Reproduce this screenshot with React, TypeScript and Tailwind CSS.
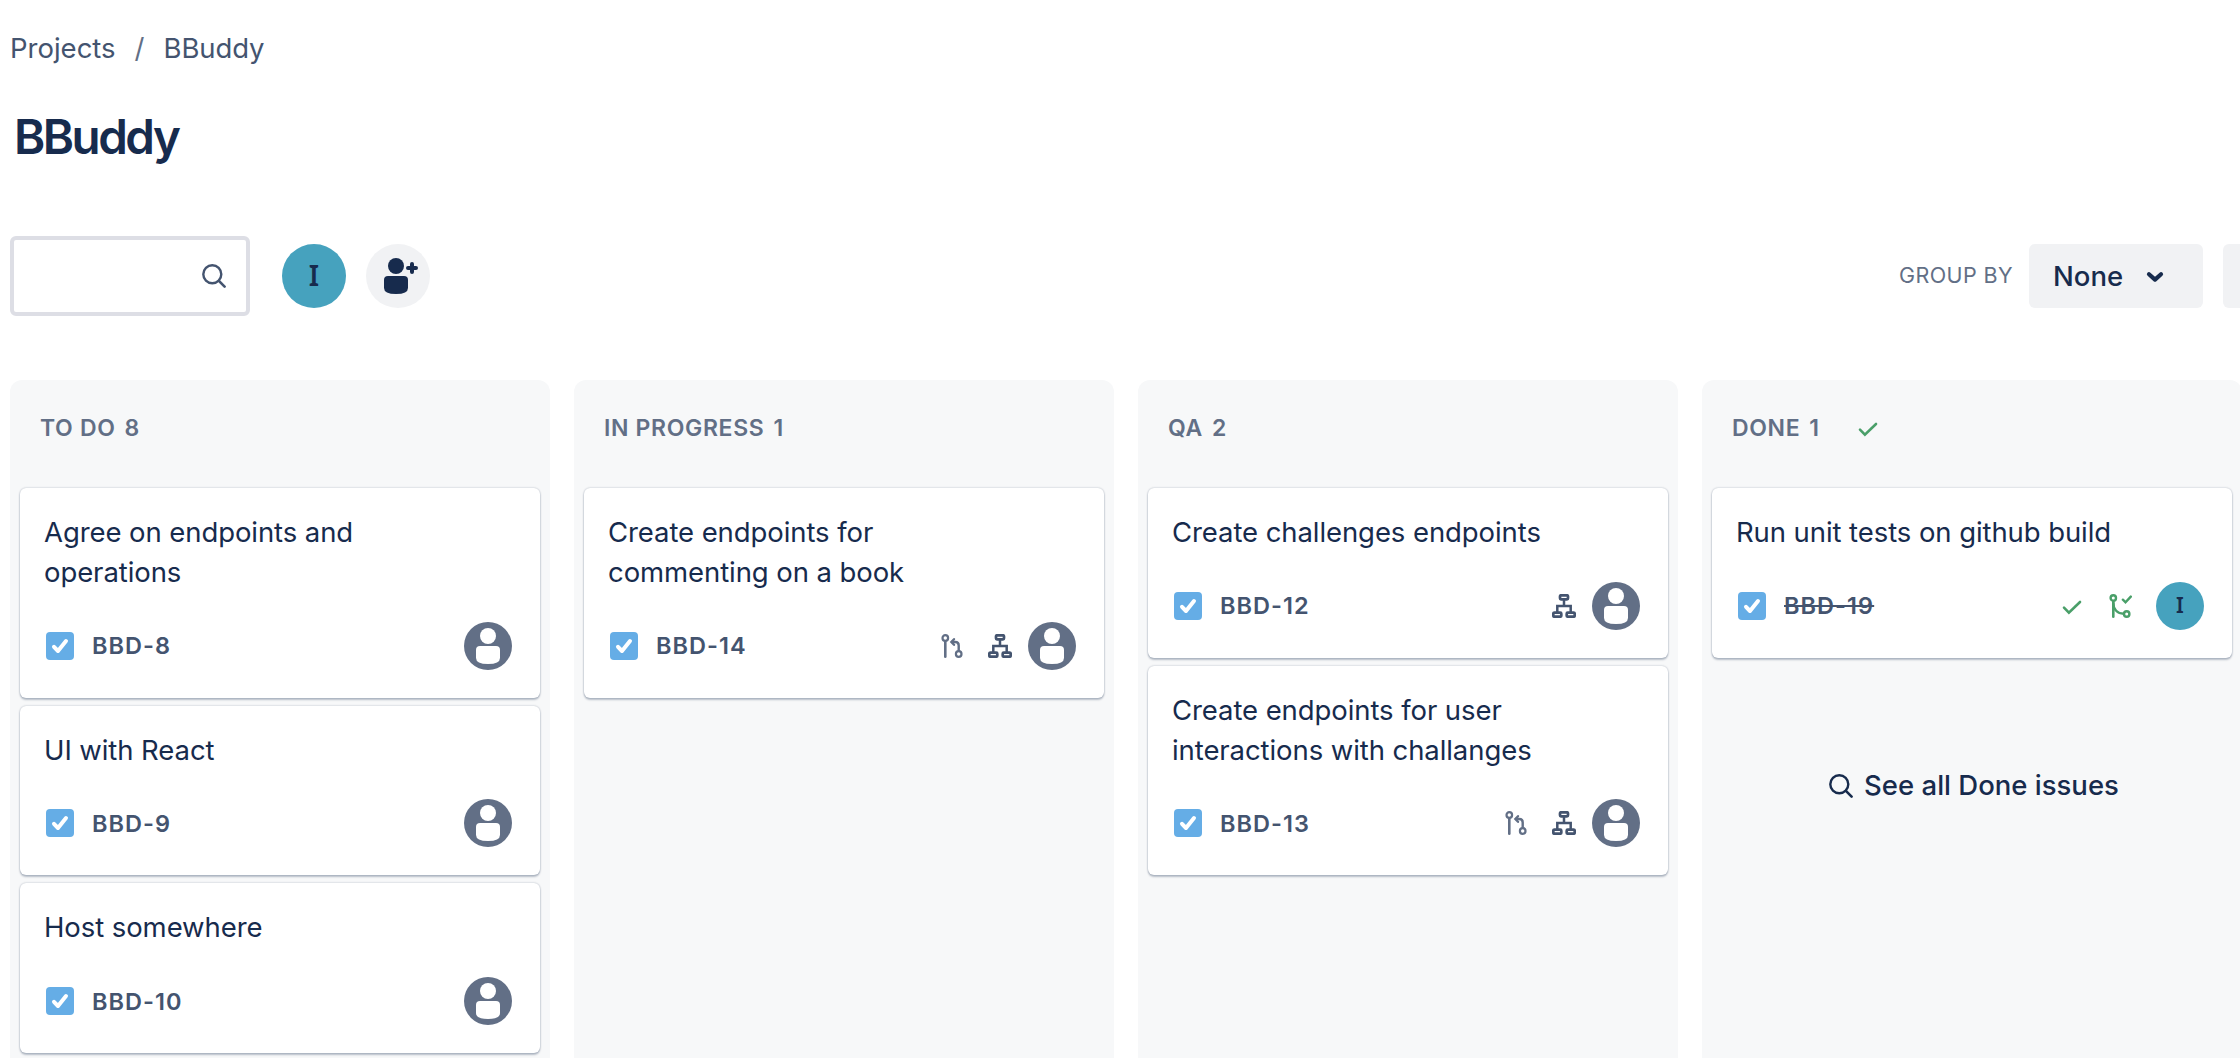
import type { ReactNode } from 'react';

type Status = 'branch' | 'subtasks' | 'done' | 'merged';

type Issue = {
  key: string;
  title: string;
  status?: Status[];
  assignee?: string;
  resolved?: boolean;
};

type Column = { name: string; count: number; done?: boolean; issues: Issue[] };

const columns: Column[] = [
  {
    name: 'TO DO',
    count: 8,
    issues: [
      { key: 'BBD-8', title: 'Agree on endpoints and operations' },
      { key: 'BBD-9', title: 'UI with React' },
      { key: 'BBD-10', title: 'Host somewhere' },
    ],
  },
  {
    name: 'IN PROGRESS',
    count: 1,
    issues: [
      { key: 'BBD-14', title: 'Create endpoints for commenting on a book', status: ['branch', 'subtasks'] },
    ],
  },
  {
    name: 'QA',
    count: 2,
    issues: [
      { key: 'BBD-12', title: 'Create challenges endpoints', status: ['subtasks'] },
      { key: 'BBD-13', title: 'Create endpoints for user interactions with challanges', status: ['branch', 'subtasks'] },
    ],
  },
  {
    name: 'DONE',
    count: 1,
    done: true,
    issues: [
      { key: 'BBD-19', title: 'Run unit tests on github build', status: ['done', 'merged'], assignee: 'I', resolved: true },
    ],
  },
];

function SearchIcon({ className }: { className: string }) {
  return (
    <svg viewBox="0 0 24 24" fill="none" stroke="currentColor" strokeLinecap="round" className={className}>
      <circle cx="10.3" cy="10.3" r="9" strokeWidth="2.4" />
      <path d="M16.9 16.9 22.6 22.6" strokeWidth="2.6" />
    </svg>
  );
}

function CheckIcon() {
  return (
    <svg viewBox="0 0 24 24" fill="none" stroke="currentColor" strokeWidth="2.6" strokeLinecap="round" className="size-6 text-[#4a9f69]">
      <path d="M4 13.6 8.9 18.6 20 8" />
    </svg>
  );
}

function BranchIcon() {
  return (
    <svg viewBox="0 0 24 24" fill="none" stroke="currentColor" strokeLinecap="round" className="size-6 text-[#626f86]">
      <circle cx="5.3" cy="4" r="2.8" strokeWidth="2.2" />
      <path d="M5.3 7.5V22.7" strokeWidth="2.6" />
      <circle cx="18.7" cy="20" r="2.8" strokeWidth="2.2" />
      <path d="M18.7 16.6V11.4Q18.7 8 15.3 8H12" strokeWidth="2.4" />
      <path d="M14 5.2 11.4 8 14 10.8" strokeWidth="2.4" />
    </svg>
  );
}

function SubtasksIcon() {
  return (
    <svg viewBox="0 0 24 24" fill="none" stroke="currentColor" strokeWidth="2.7" className="size-6 text-[#44546f]">
      <rect x="8" y="1.3" width="8" height="4" rx="1" />
      <rect x="1.3" y="18.7" width="8" height="4" rx="1" />
      <rect x="14.7" y="18.7" width="8" height="4" rx="1" />
      <path d="M12 5.5V12M5.3 18.5V12H18.7V18.5" strokeWidth="2.5" />
    </svg>
  );
}

function MergedIcon() {
  return (
    <svg viewBox="0 0 24 24" fill="none" stroke="currentColor" strokeLinecap="round" className="size-6 text-[#4a9f69]">
      <circle cx="5.3" cy="4" r="2.7" strokeWidth="2.4" />
      <path d="M5.3 7.5V22.7" strokeWidth="2.6" />
      <circle cx="18.7" cy="20" r="2.7" strokeWidth="2.4" />
      <path d="M5.3 9C5.3 15.5 9.5 19.6 15.6 19.8" strokeWidth="2.4" />
      <path d="M14.9 5.7 17.5 8.3 22.8 2.6" strokeWidth="2.4" />
    </svg>
  );
}

function Tray({ status }: { status: Status[] }) {
  const icons: Record<Status, ReactNode> = {
    branch: <BranchIcon />,
    subtasks: <SubtasksIcon />,
    done: <CheckIcon />,
    merged: <MergedIcon />,
  };
  return (
    <div className="flex gap-6">
      {status.map((s) => (
        <span key={s}>{icons[s]}</span>
      ))}
    </div>
  );
}

function Unassigned() {
  return (
    <svg viewBox="0 0 48 48" className="size-12">
      <circle cx="24" cy="24" r="24" fill="#626f86" />
      <circle cx="24" cy="14" r="8" fill="#fff" />
      <path d="M12 28a4 4 0 0 1 4-4h16a4 4 0 0 1 4 4v8q0 6-12 6t-12-6z" fill="#fff" />
    </svg>
  );
}

function IssueCard({ issue }: { issue: Issue }) {
  return (
    <article className="rounded-md bg-white pt-6 pr-7 pb-7 pl-6 shadow-[0_2px_2px_rgba(9,30,66,0.25),0_0_2px_rgba(9,30,66,0.31)]">
      <h3 className="max-w-[410px] text-[27.5px] leading-10 tracking-[-0.08px] text-[#172b4d]">{issue.title}</h3>
      <div className="mt-[29.6px] flex h-12 items-center">
        <svg viewBox="0 0 28 28" className="ml-0.5 size-7">
          <rect width="28" height="28" rx="4" fill="#65ade6" />
          <path d="M8 14.8 12 19 20 9" fill="none" stroke="#fff" strokeWidth="4" strokeLinecap="round" strokeLinejoin="round" />
        </svg>
        <span
          className={
            issue.resolved
              ? 'ml-[18px] pt-px text-[23.5px] font-semibold tracking-[1.05px] text-[#44546f] line-through decoration-[2.4px]'
              : 'ml-[18px] pt-px text-[23.5px] font-semibold tracking-[1.05px] text-[#44546f]'
          }
        >
          {issue.key}
        </span>
        <div className={issue.assignee ? 'ml-auto flex items-center gap-6' : 'ml-auto flex items-center gap-4'}>
          {issue.status && <Tray status={issue.status} />}
          {issue.assignee ? (
            <span className="flex size-12 items-center justify-center rounded-full bg-[#46a2be] font-['Noto_Sans'] text-[21px] font-semibold text-[#172b4d]">
              {issue.assignee}
            </span>
          ) : (
            <Unassigned />
          )}
        </div>
      </div>
    </article>
  );
}

function BoardColumn({ column }: { column: Column }) {
  return (
    <section className="flex w-[540px] shrink-0 flex-col rounded-t-xl bg-[#f7f8f9] px-2.5">
      <header className="flex h-[108px] items-center pb-3 pl-5 text-[23px] font-semibold text-[#626f86]">
        <h2 className="tracking-[0.65px]">{column.name}</h2>
        <span className="ml-[9px]">{column.count}</span>
        {column.done && (
          <span className="ml-[37px]">
            <CheckIcon />
          </span>
        )}
      </header>
      <div className="flex flex-col gap-2">
        {column.issues.map((issue) => (
          <IssueCard key={issue.key} issue={issue} />
        ))}
      </div>
      {column.done && (
        <button className="mt-[108px] flex h-10 items-center justify-center gap-[11px] pl-1 text-[27.5px] font-medium text-[#172b4d]">
          <SearchIcon className="size-6" />
          <span className="pt-px">See all Done issues</span>
        </button>
      )}
    </section>
  );
}

export default function App() {
  return (
    <main className="flex h-[1058px] w-[2240px] flex-col overflow-hidden bg-white pl-2.5 font-['Inter',sans-serif] text-[#172b4d]">
      <nav className="mt-[29px] flex h-10 items-center text-[27.5px] text-[#44546f]">
        <span>Projects</span>
        <span className="mx-[19px] text-[#626f86]">/</span>
        <span className="tracking-[-0.1px]">BBuddy</span>
      </nav>
      <h1 className="mt-10 pl-1 text-[47.5px] leading-[56px] font-semibold tracking-[-2.5px]">BBuddy</h1>

      <div className="mt-[71px] flex h-20 items-center">
        <div className="flex h-20 w-60 items-center justify-end rounded-md border-4 border-[#dddee5] pr-5">
          <SearchIcon className="size-6 text-[#44546f]" />
        </div>
        <span className="ml-8 flex size-16 items-center justify-center rounded-full bg-[#46a2be] pb-0.5 font-['Noto_Sans'] text-[28px] font-semibold">
          I
        </span>
        <button className="ml-5 size-16 rounded-full bg-[#f1f2f4]">
          <svg viewBox="0 0 64 64" fill="currentColor" className="size-16">
            <circle cx="30" cy="22" r="8" />
            <path d="M18 36a4 4 0 0 1 4-4h16a4 4 0 0 1 4 4v8q0 6-12 6t-12-6z" />
            <path d="M46 20v8M42 24h8" stroke="currentColor" strokeWidth="4" strokeLinecap="round" />
          </svg>
        </button>
        <span className="ml-auto pb-0.5 text-[21.5px] tracking-[0.4px] text-[#626f86]">GROUP BY</span>
        <button className="ml-4 flex h-16 w-[174px] items-center rounded-md bg-[#f1f2f4] pl-6 text-[27.5px] font-medium">
          <span className="pt-px">None</span>
          <svg viewBox="0 0 24 24" fill="none" stroke="currentColor" strokeWidth="4.2" strokeLinecap="round" strokeLinejoin="round" className="ml-5 size-6">
            <path d="M6 10.2 12 15.6 18 10.2" />
          </svg>
        </button>
        <button className="ml-5 h-16 w-[17px] rounded-l-md bg-[#f1f2f4]" />
      </div>

      <div className="mt-16 flex grow gap-6">
        {columns.map((column) => (
          <BoardColumn key={column.name} column={column} />
        ))}
      </div>
    </main>
  );
}
